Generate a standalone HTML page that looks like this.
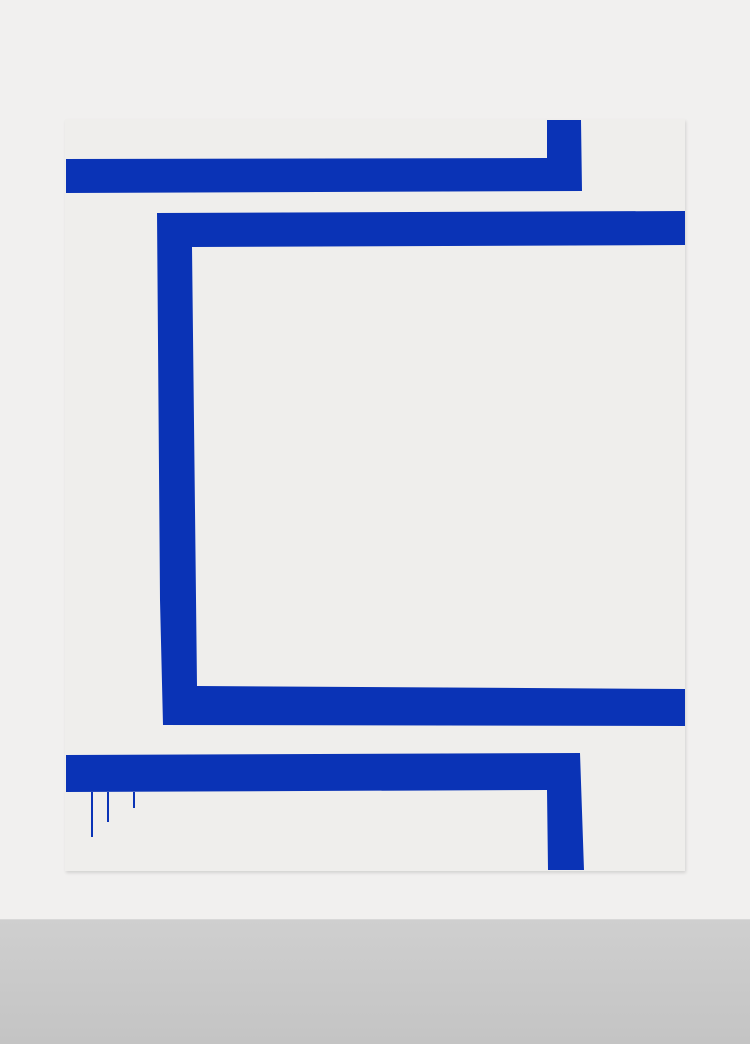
<!DOCTYPE html>
<html><head><style>
html,body{margin:0;padding:0;}
body{width:750px;height:1043px;background:#f1f0ef;position:relative;overflow:hidden;}
.canvas{position:absolute;left:65px;top:119px;width:620px;height:752px;background:#efeeec;box-shadow:1px 2px 3px rgba(0,0,0,0.12);}
.floor{position:absolute;left:0;top:919px;width:750px;height:124px;background:linear-gradient(#cfcfcf,#c4c4c4);border-top:1px solid #d8d8d8;}
svg{position:absolute;left:0;top:0;}
</style></head><body>
<div class="canvas"></div>
<div class="floor"></div>
<svg width="750" height="1043" viewBox="0 0 750 1043">
<g fill="#0a33b6">
<polygon points="66,159 547,158 547,120 581,120 582,191 66,193"/>
<polygon points="157,213 685,211 685,245 192,247 197,686 685,689 685,726 163,725 160,600"/>
<polygon points="66,755 580,753 584,870 548,870 547,790 66,792"/>
<rect x="91" y="792" width="2" height="45"/>
<rect x="107" y="792" width="2" height="30"/>
<rect x="133" y="792" width="2" height="16"/>
</g>
</svg>
</body></html>
